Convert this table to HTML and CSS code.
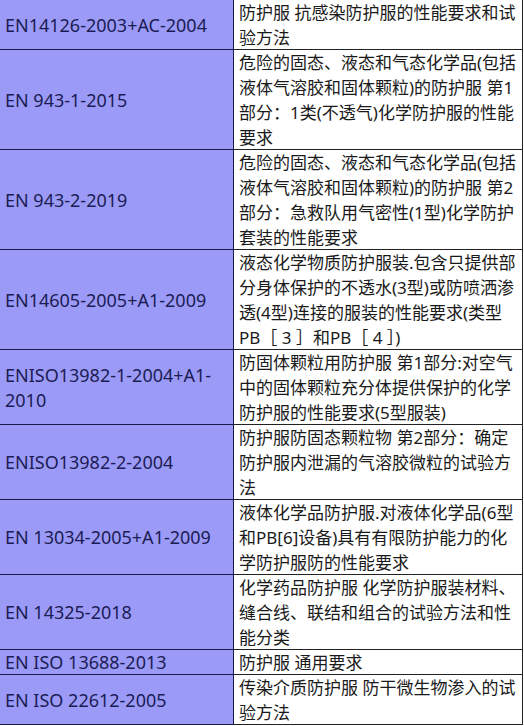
FILE: index.html
```
<!DOCTYPE html>
<html lang="zh-CN">
<head>
<meta charset="utf-8">
<title>防护服标准</title>
<link rel="stylesheet" href="styles.css">
</head>
<body>
<div class="table">
  <div class="row"><div class="code">EN14126-2003+AC-2004</div><div class="desc">防护服 抗感染防护服的性能要求和试<br>验方法</div></div>
  <div class="row"><div class="code">EN 943-1-2015</div><div class="desc">危险的固态、液态和气态化学品(包括<br>液体气溶胶和固体颗粒)的防护服 第1<br>部分：1类(不透气)化学防护服的性能<br>要求</div></div>
  <div class="row"><div class="code">EN 943-2-2019</div><div class="desc">危险的固态、液态和气态化学品(包括<br>液体气溶胶和固体颗粒)的防护服 第2<br>部分：急救队用气密性(1型)化学防护<br>套装的性能要求</div></div>
  <div class="row"><div class="code">EN14605-2005+A1-2009</div><div class="desc">液态化学物质防护服装.包含只提供部<br>分身体保护的不透水(3型)或防喷洒渗<br>透(4型)连接的服装的性能要求(类型<br>PB［ 3 ］和PB［ 4 ］)</div></div>
  <div class="row"><div class="code">ENISO13982-1-2004+A1-<br>2010</div><div class="desc">防固体颗粒用防护服 第1部分:对空气<br>中的固体颗粒充分体提供保护的化学<br>防护服的性能要求(5型服装)</div></div>
  <div class="row"><div class="code">ENISO13982-2-2004</div><div class="desc">防护服防固态颗粒物 第2部分：确定<br>防护服内泄漏的气溶胶微粒的试验方<br>法</div></div>
  <div class="row"><div class="code">EN 13034-2005+A1-2009</div><div class="desc">液体化学品防护服.对液体化学品(6型<br>和PB[6]设备)具有有限防护能力的化<br>学防护服防的性能要求</div></div>
  <div class="row"><div class="code">EN 14325-2018</div><div class="desc">化学药品防护服 化学防护服装材料、<br>缝合线、联结和组合的试验方法和性<br>能分类</div></div>
  <div class="row"><div class="code">EN ISO 13688-2013</div><div class="desc">防护服 通用要求</div></div>
  <div class="row"><div class="code">EN ISO 22612-2005</div><div class="desc">传染介质防护服 防干微生物渗入的试<br>验方法</div></div>
</div>
</body>
</html>
```
FILE: styles.css
```
html, body {
  margin: 0;
  padding: 0;
  background: #ffffff;
}
.table {
  width: 523px;
  font-family: "Noto Sans", "Noto Sans CJK SC", sans-serif;
}
.row {
  display: grid;
  grid-template-columns: 234px 1fr;
}
.code {
  background: #9b9bf7;
  color: #1c1c55;
  font-size: 18px;
  line-height: 25px;
  padding-left: 5px;
  display: flex;
  align-items: center;
  white-space: nowrap;
  box-shadow: inset -1px -1px 0 #1a1a48;
}
.desc {
  color: #1a1a1a;
  font-size: 17px;
  line-height: 25px;
  padding-left: 5px;
  white-space: nowrap;
  box-shadow: inset -1px -1px 0 #222222;
}
```
